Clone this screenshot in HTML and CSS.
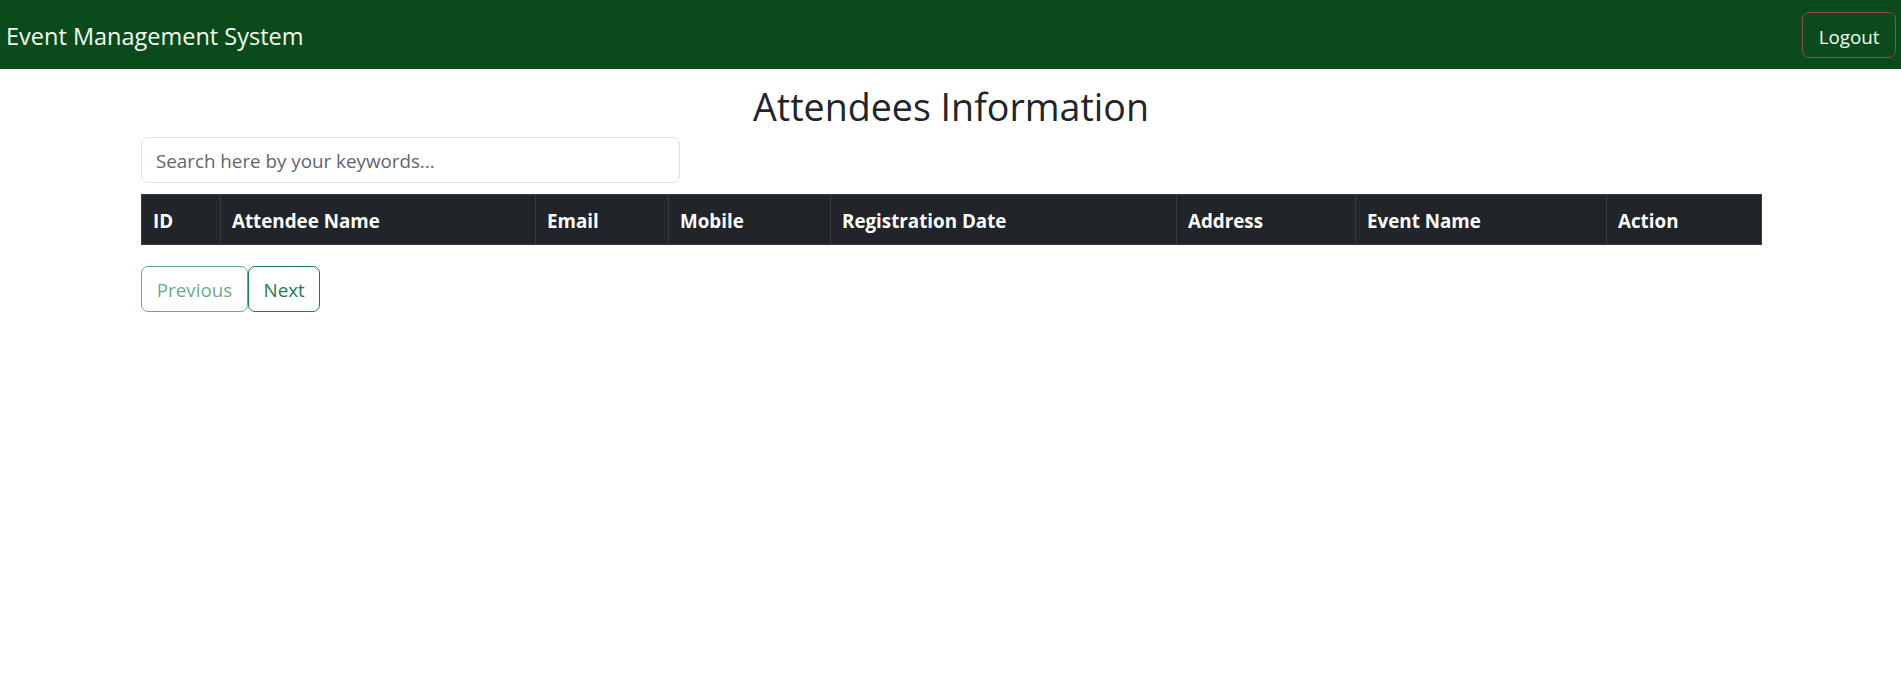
FILE: index.html
```html
<!DOCTYPE html>
<html lang="en">
<head>
<meta charset="utf-8">
<title>Event Management System</title>
<link rel="stylesheet" href="styles.css">
</head>
<body>
<nav class="navbar">
  <span class="brand">Event Management System</span>
  <button class="btn btn-logout" type="button">Logout</button>
</nav>
<main class="container">
  <h2 class="page-title">Attendees Information</h2>
  <input class="search" type="text" placeholder="Search here by your keywords...">
  <table class="table">
    <colgroup>
      <col class="c-id"><col class="c-name"><col class="c-email"><col class="c-mobile"><col class="c-date"><col class="c-addr"><col class="c-event"><col class="c-action">
    </colgroup>
    <thead>
      <tr>
        <th>ID</th>
        <th>Attendee Name</th>
        <th>Email</th>
        <th>Mobile</th>
        <th>Registration Date</th>
        <th>Address</th>
        <th>Event Name</th>
        <th>Action</th>
      </tr>
    </thead>
    <tbody></tbody>
  </table>
  <div class="pager">
    <button class="btn btn-page btn-prev disabled" type="button">Previous</button>
    <button class="btn btn-page btn-next" type="button">Next</button>
  </div>
</main>
</body>
</html>
```
FILE: styles.css
```css
*{box-sizing:border-box;}
html,body{margin:0;padding:0;}
body{
  font-family:"Open Sans","Noto Sans",sans-serif;
  font-size:18.8px;
  line-height:1.5;
  color:#212529;
  background:#fff;
}
.navbar{
  height:69px;
  background:#0b4a1a;
  display:flex;
  align-items:center;
  justify-content:space-between;
  padding:0 5px 0 6px;
}
.brand{
  color:#f4fbf4;
  font-size:23.5px;
  line-height:1.5;
  white-space:nowrap;
  padding-top:4px;
}
.btn{
  font-family:inherit;
  font-size:18.8px;
  line-height:28px;
  height:46px;
  border-radius:7px;
  background:transparent;
  cursor:pointer;
  padding:2px 14.5px 0;
  margin:0;
}
.btn-logout{
  color:#f4fbf4;
  border:1px solid #8a5140;
  padding:3px 15.5px 0;
  margin-top:1px;
}
.container{
  width:1621px;
  margin:0 auto;
  padding-left:1px;
}
.page-title{
  font-size:37.6px;
  font-weight:400;
  line-height:1.2;
  text-align:center;
  margin:15px 0 8px;
  color:#212529;
}
.search{
  display:block;
  width:539px;
  height:46px;
  border:1px solid #dee2e6;
  border-radius:7px;
  padding:2px 14px 0;
  font-family:inherit;
  font-size:18.8px;
  color:#212529;
  margin:0 0 11px;
  outline:none;
}
.search::placeholder{color:#5f666d;}
.table{
  width:1620px;
  table-layout:fixed;
  border-collapse:collapse;
  margin:0 0 21px;
}
.c-id{width:79px;}
.c-name{width:315px;}
.c-email{width:133px;}
.c-mobile{width:162px;}
.c-date{width:346px;}
.c-addr{width:179px;}
.c-event{width:251px;}
.c-action{width:155px;}
.table th{
  background:#212529;
  color:#fff;
  font-weight:700;
  text-align:left;
  font-size:18.8px;
  line-height:29px;
  padding:12px 10px 8px 11px;
  border:1px solid #373b3e;
  white-space:nowrap;
}
.pager{
  display:flex;
}
.btn-page{
  color:#1a7d50;
  border:1px solid #1a7d50;
}
.btn-prev{
  opacity:.65;
  width:107px;
}
.btn-next{
  width:72px;
}
```
